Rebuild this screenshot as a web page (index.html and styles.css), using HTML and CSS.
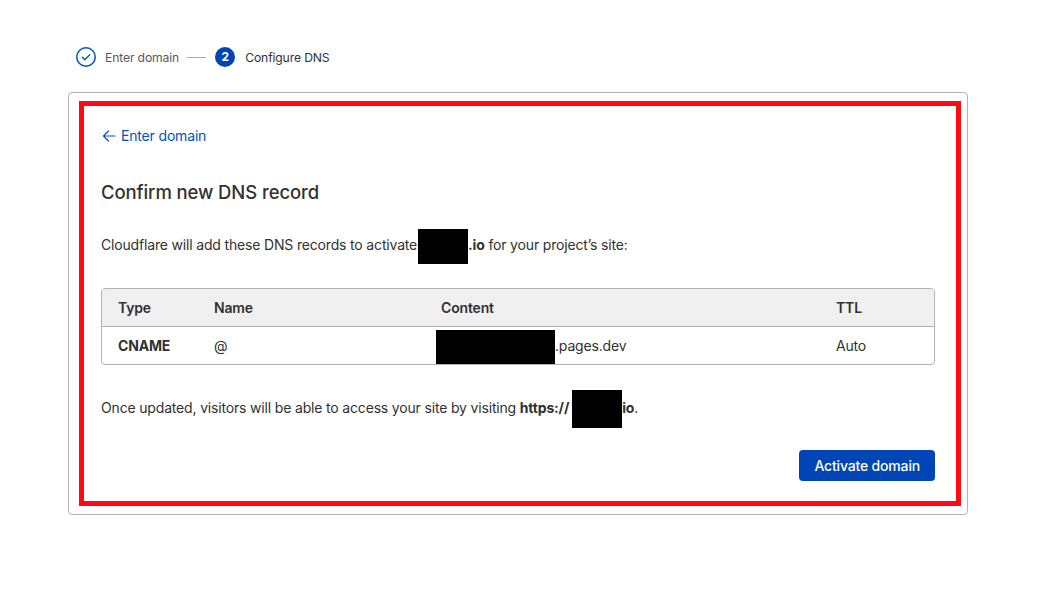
FILE: index.html
```html
<!DOCTYPE html>
<html lang="en">
<head>
<meta charset="utf-8">
<title>Configure DNS</title>
<link rel="stylesheet" href="styles.css">
</head>
<body>
<div class="page">
  <div class="stepper">
    <div class="step done">
      <svg class="step-icon" width="20" height="20" viewBox="0 0 20 20"><circle cx="10" cy="10" r="9.25" fill="none" stroke="#0051c3" stroke-width="1.5"/><path d="M6.3 10.2l2.5 2.5 4.9-5" fill="none" stroke="#0051c3" stroke-width="1.3" stroke-linecap="round" stroke-linejoin="round"/></svg>
      <span class="step-label">Enter domain</span>
    </div>
    <div class="step-line"></div>
    <div class="step current">
      <span class="step-num">2</span>
      <span class="step-label">Configure DNS</span>
    </div>
  </div>

  <div class="card">
    <div class="highlight">
      <a class="back" href="#">
        <svg width="14" height="14" viewBox="0 0 14 14"><path d="M13 7H1.5M6.5 2L1.5 7l5 5" fill="none" stroke="#0051c3" stroke-width="1.2" stroke-linecap="round" stroke-linejoin="round"/></svg>
        <span>Enter domain</span>
      </a>
      <h1 class="title">Confirm new DNS record</h1>
      <p class="text">Cloudflare will add these DNS records to activate<span class="redact r1"></span><b>.io</b> for your project’s site:</p>
      <div class="table">
        <div class="row head">
          <div class="cell">Type</div>
          <div class="cell">Name</div>
          <div class="cell">Content</div>
          <div class="cell">TTL</div>
        </div>
        <div class="row">
          <div class="cell strong">CNAME</div>
          <div class="cell">@</div>
          <div class="cell content-cell"><span class="redact r2"></span>.pages.dev</div>
          <div class="cell">Auto</div>
        </div>
      </div>
      <p class="text after">Once updated, visitors will be able to access your site by visiting <b>https://</b><span class="redact r3"></span><b>io</b>.</p>
      <div class="actions">
        <button class="btn" type="button">Activate domain</button>
      </div>
    </div>
  </div>
</div>
</body>
</html>
```

FILE: styles.css
```css
* { box-sizing: border-box; }
html, body { margin: 0; padding: 0; background: #ffffff; }
body {
  font-family: Inter, "Noto Sans", "Liberation Sans", sans-serif;
  color: #313131;
  font-size: 14px;
  line-height: 20px;
  letter-spacing: -0.17px;
}
.page {
  padding: 47px 0 0 68px;
}
.stepper {
  display: flex;
  align-items: center;
  height: 20px;
  margin-left: 8px;
}
.step {
  display: flex;
  align-items: center;
  gap: 9px;
}
.step-icon { display: block; }
.step-label {
  font-size: 12.2px;
  line-height: 20px;
  color: #595959;
  letter-spacing: -0.15px;
  position: relative;
  top: 1px;
}
.step.current .step-label { color: #313131; }
.step-line {
  width: 19px;
  height: 1px;
  background: #a6a6a6;
  margin: 1px 9px 0 8px;
}
.step-num {
  width: 20px;
  height: 20px;
  border-radius: 50%;
  background: #0045b5;
  color: #fff;
  font-size: 12px;
  font-weight: 700;
  display: flex;
  align-items: center;
  justify-content: center;
  margin-right: 1px;
  letter-spacing: 0;
}
.card {
  margin-top: 25px;
  width: 900px;
  border: 1px solid #b3b3b3;
  border-radius: 4px;
  padding: 8px 6px 8px 10px;
}
.highlight {
  border: 5px solid #ff0a14;
  padding: 20px 21px 20px 17px;
}
.back {
  display: inline-flex;
  align-items: center;
  gap: 5px;
  color: #0051c3;
  text-decoration: none;
  font-size: 14px;
  line-height: 20px;
  padding-left: 1px;
}
.back svg { display: block; }
.title {
  margin: 32px 0 0;
  font-size: 18.5px;
  line-height: 24px;
  font-weight: 500;
  color: #313131;
  letter-spacing: -0.1px;
}
.text {
  margin: 31px 0 0;
  font-size: 14px;
  line-height: 20px;
}
.text b { font-weight: 700; }
.redact {
  display: inline-block;
  background: #000;
  vertical-align: middle;
}
.r1 { width: 50px; height: 35px; margin: -12px 0 -12px 1px; }
.r2 { width: 119px; height: 34px; margin: -12px 0 -12px 0; }
.r3 { width: 50px; height: 38px; margin: -12px 0 -12px 3px; }
.table {
  margin-top: 33px;
  border: 1px solid #b3b3b3;
  border-radius: 4px;
  overflow: hidden;
}
.row {
  display: grid;
  grid-template-columns: 96px 227px 395px 1fr;
  height: 37px;
  align-items: center;
}
.row.head {
  background: #f0f0f0;
  border-bottom: 1px solid #b3b3b3;
  height: 38px;
  font-weight: 600;
}
.cell {
  padding-left: 16px;
  white-space: nowrap;
}
.cell.strong { font-weight: 700; }
.content-cell { padding-left: 11px; }
.after { margin-top: 33px; }
.actions {
  display: flex;
  justify-content: flex-end;
  margin-top: 32px;
}
.btn {
  height: 31px;
  padding: 0 15px;
  background: #0045b5;
  color: #fff;
  border: none;
  border-radius: 4px;
  font-family: inherit;
  font-size: 14px;
  font-weight: 500;
  letter-spacing: -0.17px;
  cursor: pointer;
}
```
